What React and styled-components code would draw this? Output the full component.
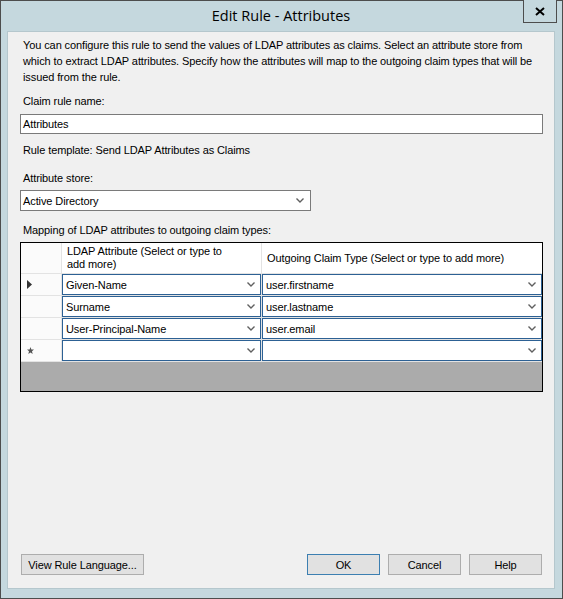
import React from "react";
import styled, { createGlobalStyle } from "styled-components";

const GlobalStyle = createGlobalStyle`
  html, body {
    margin: 0;
    padding: 0;
    background: #c5d8de;
  }
  * {
    box-sizing: border-box;
  }
`;

const Window = styled.div`
  width: 563px;
  height: 599px;
  display: flex;
  flex-direction: column;
  background: #c5d8de;
  border: 1px solid #4d4d4d;
  padding: 0 7px 9px 6px;
  font-family: "Liberation Sans", Arial, sans-serif;
  font-size: 11px;
  letter-spacing: -0.1px;
  color: #000;
`;

const TitleBar = styled.div`
  position: relative;
  height: 30px;
  display: flex;
  align-items: center;
  justify-content: center;
  flex-shrink: 0;
`;

const Title = styled.div`
  font-family: "Open Sans", "Noto Sans", sans-serif;
  font-size: 14.5px;
  letter-spacing: 0;
  color: #000;
  margin-top: -2px;
`;

const CloseButton = styled.button`
  position: absolute;
  top: -1px;
  right: -2px;
  width: 34px;
  height: 23px;
  border: 1px solid #4d4d4d;
  border-top: none;
  background: #c5d8de;
  display: flex;
  align-items: center;
  justify-content: center;
  padding: 0;
`;

const Client = styled.div`
  flex: 1;
  display: flex;
  flex-direction: column;
  background: #f0f0f0;
  border: 1px solid #b5c7cd;
  padding: 5px 11px 13px 12px;
`;

const Text = styled.div`
  line-height: 16px;
  padding-left: 3px;
  margin-top: ${(p) => p.$mt || 0}px;
  white-space: nowrap;
`;

const Field = styled.div`
  height: ${(p) => p.$h || 20}px;
  width: ${(p) => p.$w || "100%"};
  margin-top: ${(p) => p.$mt || 0}px;
  border: 1px solid #7a7a7a;
  background: #fff;
  display: flex;
  align-items: center;
  padding: 0 6px 0 2px;
  line-height: 16px;
`;

const FieldText = styled.span`
  flex: 1;
  white-space: nowrap;
`;

const DataGrid = styled.div`
  margin-top: 4px;
  height: 150px;
  border: 1px solid #000;
  background: #e3e3e3;
  display: grid;
  grid-template-columns: 40px 199px 1fr;
  grid-template-rows: 30px repeat(4, 21px) 1fr;
  gap: 1px;
`;

const HeaderCell = styled.div`
  background: #fff;
  display: flex;
  align-items: center;
  padding: 0 4px 0 5px;
  line-height: 13px;
`;

const RowHeader = styled.div`
  background: #fbfbfb;
  display: flex;
  align-items: center;
  padding-left: 6px;
`;

const Combo = styled.div`
  background: #fff;
  border: 1px solid #2d6194;
  display: flex;
  align-items: center;
  padding: 0 5px 0 3px;
  line-height: 16px;
`;

const Empty = styled.div`
  grid-column: 1 / -1;
  background: #ababab;
`;

const Footer = styled.div`
  margin-top: auto;
  display: flex;
  align-items: center;
  gap: 8px;
  padding-left: 1px;
  padding-right: 1px;
`;

const Button = styled.button`
  height: 21px;
  width: ${(p) => p.$w || 73}px;
  margin-left: ${(p) => (p.$push ? "auto" : "0")};
  background: #e1e1e1;
  border: 1px solid ${(p) => (p.$default ? "#3c7fb1" : "#adadad")};
  font-family: "Liberation Sans", Arial, sans-serif;
  font-size: 11px;
  letter-spacing: -0.1px;
  color: #000;
  padding: 0;
  text-align: center;
`;

const Chevron = () => (
  <svg width="8" height="5" viewBox="0 0 8 5">
    <path d="M0.5 0.5 L4 4 L7.5 0.5" fill="none" stroke="#606060" strokeWidth="1.4" />
  </svg>
);

const rows = [
  { ldap: "Given-Name", claim: "user.firstname", current: true },
  { ldap: "Surname", claim: "user.lastname" },
  { ldap: "User-Principal-Name", claim: "user.email" },
  { ldap: "", claim: "", isNew: true },
];

export default function App() {
  return (
    <>
      <GlobalStyle />
      <Window>
        <TitleBar>
          <Title>Edit Rule - Attributes</Title>
          <CloseButton aria-label="Close">
            <svg width="10" height="9" viewBox="0 0 10 9">
              <path d="M1 1 L9 8 M9 1 L1 8" stroke="#000" strokeWidth="2" />
            </svg>
          </CloseButton>
        </TitleBar>
        <Client>
          <Text>
            You can configure this rule to send the values of LDAP attributes as claims. Select an attribute store from
            <br />
            which to extract LDAP attributes. Specify how the attributes will map to the outgoing claim types that will be
            <br />
            issued from the rule.
          </Text>
          <Text $mt={8}>Claim rule name:</Text>
          <Field $mt={5}>
            <FieldText>Attributes</FieldText>
          </Field>
          <Text $mt={8}>Rule template: Send LDAP Attributes as Claims</Text>
          <Text $mt={12}>Attribute store:</Text>
          <Field $mt={4} $h={21} $w="291px">
            <FieldText>Active Directory</FieldText>
            <Chevron />
          </Field>
          <Text $mt={11}>Mapping of LDAP attributes to outgoing claim types:</Text>
          <DataGrid>
            <RowHeader />
            <HeaderCell>
              LDAP Attribute (Select or type to
              <br />
              add more)
            </HeaderCell>
            <HeaderCell>Outgoing Claim Type (Select or type to add more)</HeaderCell>
            {rows.map((r, i) => (
              <React.Fragment key={i}>
                <RowHeader>
                  {r.current && (
                    <svg width="5" height="9" viewBox="0 0 5 9">
                      <path d="M0 0 L5 4.5 L0 9 Z" fill="#333" />
                    </svg>
                  )}
                  {r.isNew && (
                    <svg width="7" height="7" viewBox="0 0 7 7">
                      <path d="M3.5 0 L4.4 2.4 L7 2.6 L5 4.2 L5.7 7 L3.5 5.4 L1.3 7 L2 4.2 L0 2.6 L2.6 2.4 Z" fill="#555" />
                    </svg>
                  )}
                </RowHeader>
                <Combo>
                  <FieldText>{r.ldap}</FieldText>
                  <Chevron />
                </Combo>
                <Combo>
                  <FieldText>{r.claim}</FieldText>
                  <Chevron />
                </Combo>
              </React.Fragment>
            ))}
            <Empty />
          </DataGrid>
          <Footer>
            <Button $w={123}>View Rule Language...</Button>
            <Button $push $default>OK</Button>
            <Button>Cancel</Button>
            <Button>Help</Button>
          </Footer>
        </Client>
      </Window>
    </>
  );
}
